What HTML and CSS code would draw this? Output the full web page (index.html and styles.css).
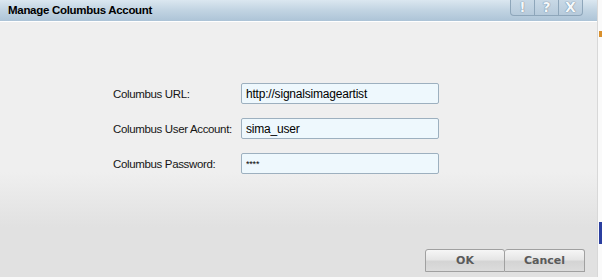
FILE: index.html
```html
<!DOCTYPE html>
<html lang="en">

<head>
    <meta charset="UTF-8">
    <title>Manage Columbus Account</title>
    <link rel="stylesheet" href="styles.css">
</head>

<body>
    <div class="window">
        <!-- Title bar -->
        <div class="titlebar">
            <span class="title">Manage Columbus Account</span>
            <div class="caption-buttons">
                <span class="cap-btn">!</span>
                <span class="cap-btn">?</span>
                <span class="cap-btn">X</span>
            </div>
        </div>

        <!-- Form -->
        <div class="content">
            <div class="form">
                <label for="url">Columbus URL:</label>
                <input id="url" type="text" value="http://signalsimageartist">
                <label for="user">Columbus User Account:</label>
                <input id="user" type="text" value="sima_user">
                <label for="pass">Columbus Password:</label>
                <input id="pass" type="text" class="password" value="****">
            </div>
        </div>

        <!-- Buttons -->
        <div class="footer">
            <button class="btn">OK</button>
            <button class="btn">Cancel</button>
        </div>
    </div>
    <div class="edge">
        <span class="edge-orange"></span>
        <span class="edge-blue"></span>
    </div>
</body>

</html>
```

FILE: styles.css
```css
body {
    margin: 0;
    width: 602px;
    height: 280px;
    background-color: #fafafa;
    font-family: 'Liberation Sans', Arial, sans-serif;
    display: flex;
    overflow: hidden;
}

.window {
    width: 598px;
    height: 277px;
    display: flex;
    flex-direction: column;
    background: linear-gradient(to bottom, #efefef 0%, #efefef 62%, #e1e1e1 82%, #e1e1e1 100%);
    border-right: 1px solid #d8d8d8;
    box-sizing: border-box;
}

.titlebar {
    height: 21px;
    flex: none;
    display: flex;
    align-items: flex-start;
    justify-content: space-between;
    background: linear-gradient(to bottom, #dbe7f0 0%, #c3d5e3 45%, #adc4d7 100%);
    border-bottom: 1px solid #ffffff;
}

.title {
    font-weight: bold;
    font-size: 11.5px;
    color: #000;
    padding: 4px 0 0 8px;
    letter-spacing: -0.3px;
}

.caption-buttons {
    display: flex;
    margin-right: 14px;
}

.cap-btn {
    width: 23px;
    height: 15px;
    border: 1px solid #8ea6ba;
    border-top: none;
    border-left: none;
    background: linear-gradient(to bottom, #c9d9e6, #b6cadb);
    color: #f4f8fb;
    font-family: 'DejaVu Sans', sans-serif;
    font-weight: bold;
    font-size: 14px;
    line-height: 15px;
    text-align: center;
    text-shadow: 0 0 1px #6f8598, 0 0 1px #6f8598;
}

.cap-btn:first-child {
    border-left: 1px solid #8ea6ba;
    border-bottom-left-radius: 4px;
}

.cap-btn:last-child {
    border-bottom-right-radius: 4px;
}

.content {
    flex: 1;
    padding: 61px 0 0 113px;
}

.form {
    display: grid;
    grid-template-columns: 128px 198px;
    row-gap: 14px;
    align-items: center;
}

label {
    font-size: 11.5px;
    color: #151515;
    white-space: nowrap;
    letter-spacing: -0.35px;
}

input {
    height: 21px;
    box-sizing: border-box;
    margin: 0;
    padding: 0 4px;
    border: 1px solid #9db0bf;
    border-radius: 2px;
    background-color: #eef8fd;
    font-family: 'Liberation Sans', Arial, sans-serif;
    font-size: 12px;
    letter-spacing: -0.2px;
    color: #000;
    outline: none;
}

.password {
    font-size: 9px;
}

.footer {
    flex: none;
    display: flex;
    justify-content: flex-end;
    padding: 0 12px 5px 0;
}

.btn {
    width: 80px;
    height: 23px;
    margin: 0;
    border: 1px solid #a0a0a0;
    border-radius: 3px 3px 0 0;
    background: linear-gradient(to bottom, #f6f6f6 0%, #e6e6e6 45%, #d4d4d4 55%, #dcdcdc 100%);
    color: #5a5a5a;
    font-family: 'DejaVu Sans', sans-serif;
    font-weight: bold;
    font-size: 11px;
}

.btn + .btn {
    border-left: none;
}

.edge {
    flex: 1;
    position: relative;
}

.edge-orange {
    position: absolute;
    left: 1px;
    top: 31px;
    width: 3px;
    height: 6px;
    background-color: #d9902d;
}

.edge-blue {
    position: absolute;
    left: 1px;
    top: 222px;
    width: 3px;
    height: 22px;
    background-color: #2b3fa0;
}
```
